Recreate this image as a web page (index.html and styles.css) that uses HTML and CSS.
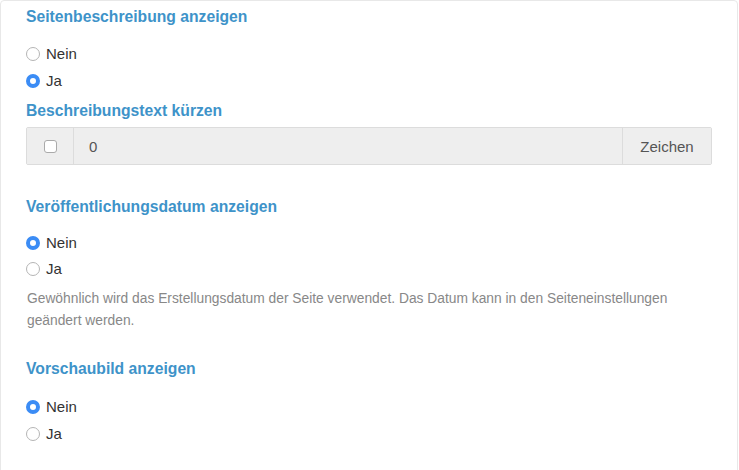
FILE: index.html
```html
<!DOCTYPE html>
<html lang="de">
<head>
<meta charset="utf-8">
<title>Einstellungen</title>
<link rel="stylesheet" href="styles.css">
</head>
<body>
<div class="panel">
  <section class="group first">
    <h3 class="title">Seitenbeschreibung anzeigen</h3>
    <div class="radios">
      <label class="radio"><input type="radio" name="desc"><span>Nein</span></label>
      <label class="radio"><input type="radio" name="desc" checked><span>Ja</span></label>
    </div>
  </section>
  <section class="group tight">
    <h3 class="title">Beschreibungstext kürzen</h3>
    <div class="input-group">
      <div class="addon addon-check"><input type="checkbox" class="check"></div>
      <input class="field" type="text" value="0" disabled>
      <div class="addon addon-text">Zeichen</div>
    </div>
  </section>
  <section class="group">
    <h3 class="title">Veröffentlichungsdatum anzeigen</h3>
    <div class="radios compact">
      <label class="radio"><input type="radio" name="date" checked><span>Nein</span></label>
      <label class="radio"><input type="radio" name="date"><span>Ja</span></label>
    </div>
    <p class="help">Gewöhnlich wird das Erstellungsdatum der Seite verwendet. Das Datum kann in den Seiteneinstellungen geändert werden.</p>
  </section>
  <section class="group">
    <h3 class="title">Vorschaubild anzeigen</h3>
    <div class="radios last">
      <label class="radio"><input type="radio" name="thumb" checked><span>Nein</span></label>
      <label class="radio"><input type="radio" name="thumb"><span>Ja</span></label>
    </div>
  </section>
</div>
</body>
</html>
```
FILE: styles.css
```css
html, body {
  margin: 0;
  padding: 0;
  background: #fff;
  overflow: hidden;
}
body {
  font-family: "Liberation Sans", Arial, Helvetica, sans-serif;
  color: #333;
}
.panel {
  box-sizing: border-box;
  width: 738px;
  min-height: 520px;
  border: 1px solid #e8e8e8;
  border-radius: 4px;
  padding: 6px 25px 0 25px;
  display: flex;
  flex-direction: column;
}
.group {
  display: flex;
  flex-direction: column;
  margin-top: 32px;
}
.group.first {
  margin-top: 0;
}
.group.tight {
  margin-top: 7px;
}
.title {
  margin: 0;
  font-size: 15.7px;
  line-height: 20px;
  font-weight: bold;
  color: #3e93c9;
}
.radios {
  display: flex;
  flex-direction: column;
  margin-top: 13px;
}
.radio {
  display: flex;
  align-items: center;
  height: 27px;
  font-size: 15px;
  color: #333;
}
.radios.compact .radio {
  height: 26px;
}
.radio input {
  appearance: none;
  -webkit-appearance: none;
  box-sizing: border-box;
  width: 14px;
  height: 14px;
  margin: 0 6px 0 0;
  border: 1px solid #b5b5b5;
  border-radius: 50%;
  background: #fff;
  flex: none;
}
.radio input:checked {
  border: 4.5px solid #3b8cf5;
  background: #fff;
}
.radio span {
  line-height: 20px;
}
.input-group {
  display: flex;
  margin-top: 6px;
  height: 38px;
  box-sizing: border-box;
  border: 1px solid #dcdcdc;
  border-radius: 2px;
  background: #eeeeee;
}
.addon {
  display: flex;
  align-items: center;
  justify-content: center;
  background: #eeeeee;
  font-size: 15px;
  color: #555;
}
.addon-check {
  width: 46px;
  border-right: 1px solid #dcdcdc;
}
.addon-text {
  width: 88px;
  border-left: 1px solid #dcdcdc;
}
.check {
  appearance: none;
  -webkit-appearance: none;
  box-sizing: border-box;
  width: 13px;
  height: 13px;
  margin: 0;
  border: 1px solid #aaa;
  border-radius: 3px;
  background: #fff;
}
.field {
  flex: 1;
  min-width: 0;
  border: 0;
  margin: 0;
  padding: 0 15px;
  background: #eeeeee;
  font-family: inherit;
  font-size: 15px;
  color: #555;
  outline: none;
}
.help {
  margin: 6px 0 0 1px;
  font-size: 13.8px;
  line-height: 22px;
  color: #888;
}
.group:last-child {
  margin-top: 27px;
}
.radios.last {
  margin-top: 14px;
}
```
